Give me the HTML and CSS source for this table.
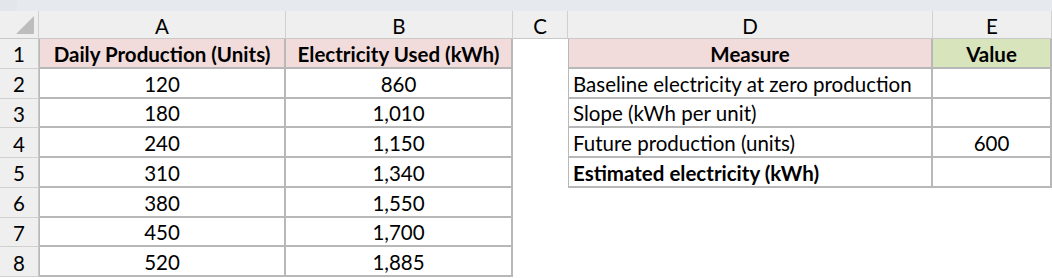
FILE: index.html
```html
<!DOCTYPE html>
<html>
<head>
<meta charset="utf-8">
<link rel="stylesheet" href="styles.css">
</head>
<body>
<div class="topbar"><div class="tb-left"></div><div class="tb-mid"></div><div class="tb-right"></div></div>
<div class="sheet">
  <div class="corner"><div class="tri"></div></div>
  <div class="colh">A</div>
  <div class="colh">B</div>
  <div class="colh">C</div>
  <div class="colh">D</div>
  <div class="colh">E</div>

  <div class="rowh">1</div>
  <div class="c t first pink bold">Daily Production (Units)</div>
  <div class="c t pink bold">Electricity Used (kWh)</div>
  <div class="c blank"></div>
  <div class="c t first pink bold">Measure</div>
  <div class="c t green bold">Value</div>

  <div class="rowh">2</div>
  <div class="c t first">120</div>
  <div class="c t">860</div>
  <div class="c blank"></div>
  <div class="c t first left">Baseline electricity at zero production</div>
  <div class="c t"></div>

  <div class="rowh">3</div>
  <div class="c t first">180</div>
  <div class="c t">1,010</div>
  <div class="c blank"></div>
  <div class="c t first left">Slope (kWh per unit)</div>
  <div class="c t"></div>

  <div class="rowh">4</div>
  <div class="c t first">240</div>
  <div class="c t">1,150</div>
  <div class="c blank"></div>
  <div class="c t first left">Future production (units)</div>
  <div class="c t">600</div>

  <div class="rowh">5</div>
  <div class="c t first">310</div>
  <div class="c t">1,340</div>
  <div class="c blank"></div>
  <div class="c t first left bold">Estimated electricity (kWh)</div>
  <div class="c t"></div>

  <div class="rowh">6</div>
  <div class="c t first">380</div>
  <div class="c t">1,550</div>
  <div class="c blank"></div>
  <div class="c blank"></div>
  <div class="c blank"></div>

  <div class="rowh">7</div>
  <div class="c t first">450</div>
  <div class="c t">1,700</div>
  <div class="c blank"></div>
  <div class="c blank"></div>
  <div class="c blank"></div>

  <div class="rowh">8</div>
  <div class="c t first">520</div>
  <div class="c t">1,885</div>
  <div class="c blank"></div>
  <div class="c blank"></div>
  <div class="c blank"></div>
</div>
</body>
</html>
```
FILE: styles.css
```css
* { box-sizing: border-box; }
html, body { margin: 0; padding: 0; background: #ffffff; }
body {
  font-family: "Lato", "Open Sans", "Liberation Sans", sans-serif;
  font-size: 20.5px;
  color: #000;
  width: 1052px;
  height: 278px;
  overflow: hidden;
}
.topbar {
  height: 11px;
  background: #e6e9ed;
  display: flex;
}
.tb-left { width: 17px; background: #e3e6ea; }
.tb-mid { flex: 1; }
.tb-right { width: 0; }
.sheet {
  display: grid;
  grid-template-columns: 39px 247px 227px 55px 365px 119px;
  grid-template-rows: 28px repeat(8, 29.75px);
}
.corner {
  background: #efefef;
  border-right: 1px solid #d0d0d0;
  border-bottom: 1px solid #c8c8c8;
  position: relative;
}
.tri {
  position: absolute;
  right: 4px;
  bottom: 4px;
  width: 0;
  height: 0;
  border-left: 18px solid transparent;
  border-bottom: 18px solid #bdbdbd;
}
.colh {
  background: #efefef;
  border-right: 1px solid #d0d0d0;
  border-bottom: 1px solid #c8c8c8;
  display: flex;
  align-items: center;
  justify-content: center;
  padding-top: 2px;
}
.rowh {
  background: #efefef;
  border-right: 1px solid #c8c8c8;
  border-bottom: 1px solid #d0d0d0;
  display: flex;
  align-items: center;
  justify-content: center;
  padding-top: 2px;
}
.c {
  display: flex;
  align-items: center;
  justify-content: center;
  white-space: nowrap;
  background: #fff;
  padding-top: 2px;
}
.t {
  border-right: 2px solid #b8b8b8;
  border-bottom: 2px solid #b8b8b8;
}
.first { border-left: 1px solid #b8b8b8; }
.left { justify-content: flex-start; padding-left: 4px; }
.bold { font-weight: bold; }
.pink { background: #f2dcdb; }
.green { background: #d8e4bc; }
```
